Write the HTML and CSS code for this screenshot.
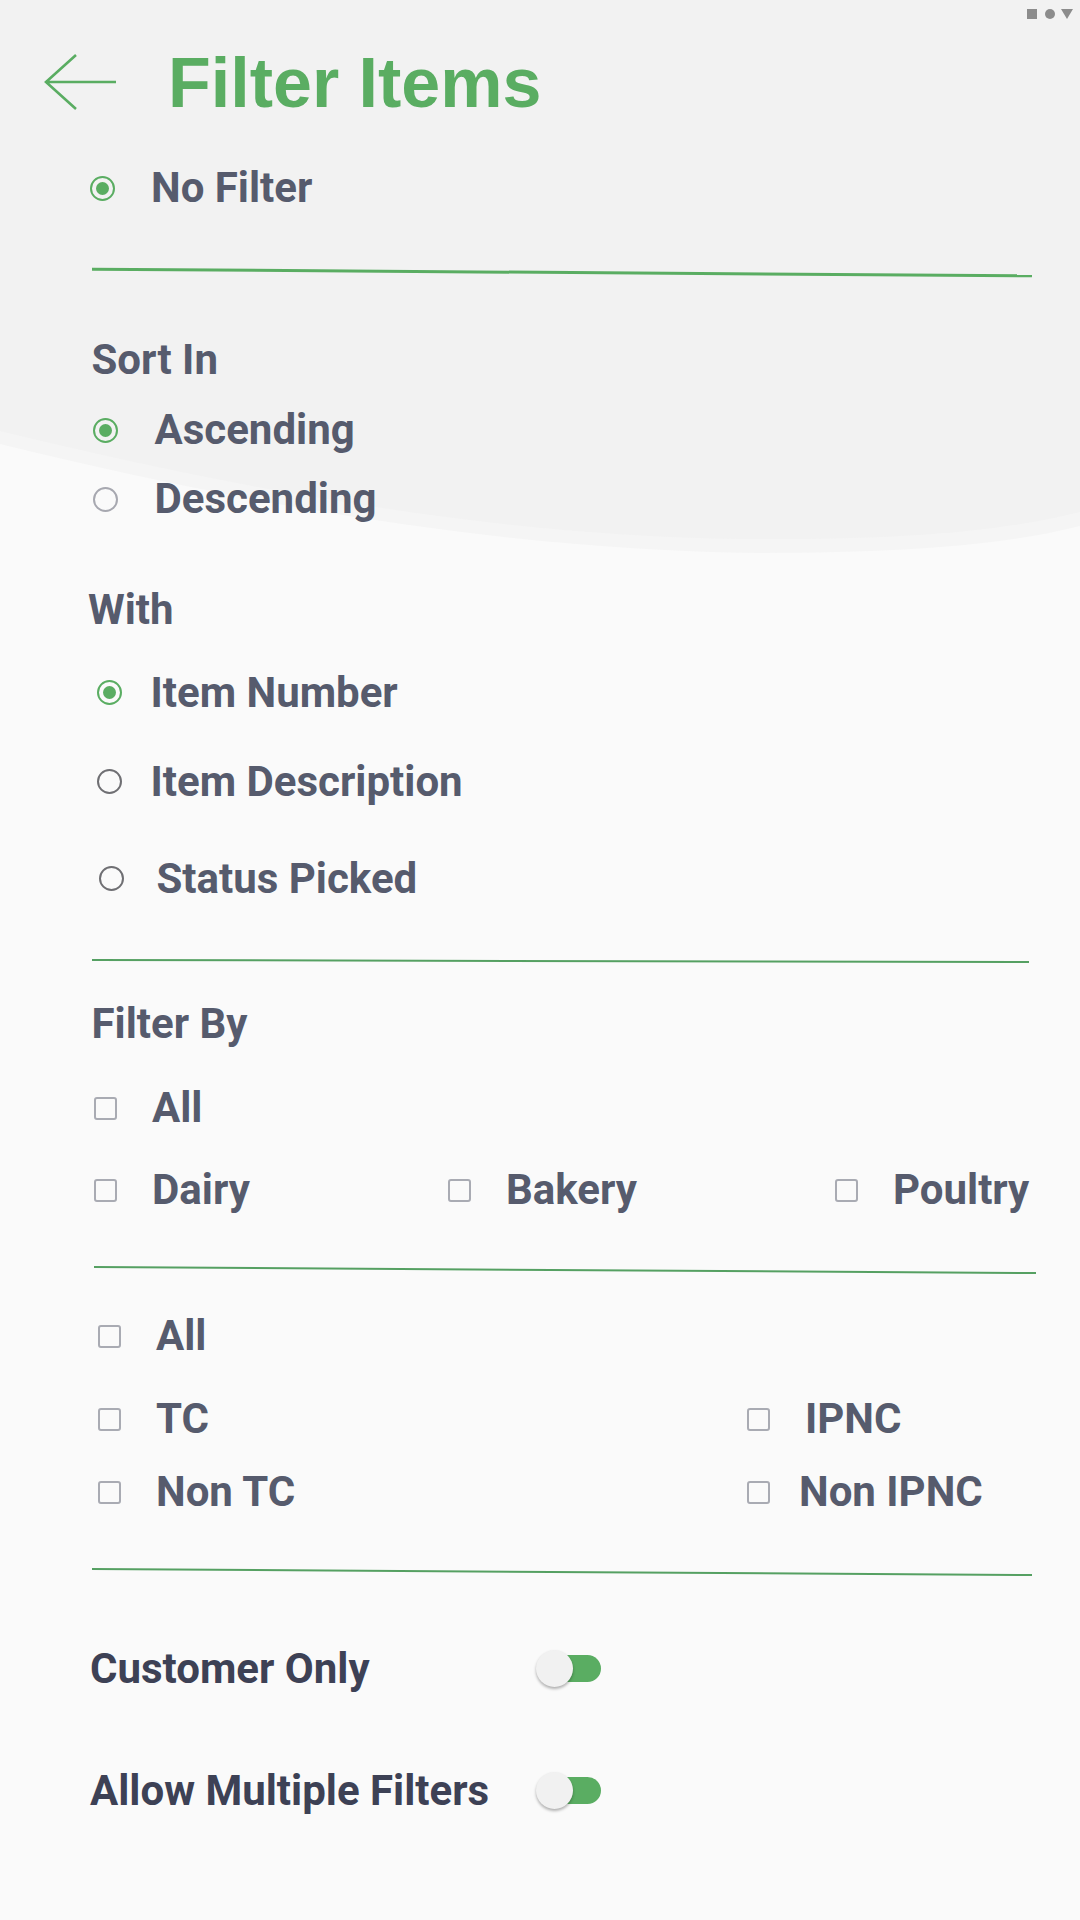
FILE: index.html
```html
<!DOCTYPE html>
<html lang="en">
<head>
<meta charset="utf-8">
<title>Filter Items</title>
<link rel="stylesheet" href="styles.css">
</head>
<body>
<div class="page">
  <svg class="bg" viewBox="0 0 1080 1920" width="1080" height="1920" aria-hidden="true">
    <path class="bg-band" d="M0 0 H1080 V526 C1000 546 900 553 760 553 C500 550 250 505 0 444 Z"/>
    <path class="bg-top" d="M0 0 H1080 V512 C1000 532 900 540 740 539 C500 536 250 492 0 431 Z"/>
  </svg>
  <div class="content">
    <div class="statusbar">
      <svg width="46" height="10" viewBox="0 0 46 10" aria-hidden="true">
        <rect x="0" y="0" width="10" height="10" fill="#8c8c8c"/>
        <circle cx="23" cy="5" r="5" fill="#8c8c8c"/>
        <polygon points="34,0 46,0 40,10" fill="#8c8c8c"/>
      </svg>
    </div>

    <header class="header">
      <svg class="back" width="74" height="58" viewBox="0 0 74 58" aria-hidden="true">
        <path d="M32 1 L2 28 L32 55 M2 28 H72"/>
      </svg>
      <h1 class="title">Filter Items</h1>
    </header>

    <div class="opt row-nofilter"><span class="radio on"></span><span>No Filter</span></div>

    <div class="rule rule-1"></div>

    <h2 class="heading head-sort">Sort In</h2>
    <div class="opt row-asc"><span class="radio on"></span><span>Ascending</span></div>
    <div class="opt row-desc"><span class="radio"></span><span>Descending</span></div>

    <h2 class="heading head-with">With</h2>
    <div class="opt row-num"><span class="radio on"></span><span>Item Number</span></div>
    <div class="opt row-descr"><span class="radio dark"></span><span>Item Description</span></div>
    <div class="opt row-status"><span class="radio dark"></span><span>Status Picked</span></div>

    <div class="rule rule-2"></div>

    <h2 class="heading head-filter">Filter By</h2>
    <div class="checks row-all1">
      <label class="ck"><span class="check"></span><span>All</span></label>
    </div>
    <div class="checks cat-grid">
      <label class="ck"><span class="check"></span><span>Dairy</span></label>
      <label class="ck"><span class="check"></span><span>Bakery</span></label>
      <label class="ck"><span class="check"></span><span>Poultry</span></label>
    </div>

    <div class="rule rule-3"></div>

    <div class="checks row-all2">
      <label class="ck"><span class="check"></span><span>All</span></label>
    </div>
    <div class="checks flag-grid row-tc">
      <label class="ck"><span class="check"></span><span>TC</span></label>
      <label class="ck"><span class="check"></span><span>IPNC</span></label>
    </div>
    <div class="checks flag-grid row-nontc">
      <label class="ck"><span class="check"></span><span>Non TC</span></label>
      <label class="ck ck-tight"><span class="check"></span><span>Non IPNC</span></label>
    </div>

    <div class="rule rule-4"></div>

    <div class="setting row-customer">
      <span>Customer Only</span>
      <span class="toggle"><span class="track"></span><span class="thumb"></span></span>
    </div>
    <div class="setting row-multi">
      <span>Allow Multiple Filters</span>
      <span class="toggle"><span class="track"></span><span class="thumb"></span></span>
    </div>
  </div>
</div>
</body>
</html>
```

FILE: styles.css
```css
* { box-sizing: border-box; }
html, body { margin: 0; padding: 0; }
body {
  background: #fafafa;
  font-family: Roboto, "Noto Sans", sans-serif;
  color: #565b6d;
}
.page {
  position: relative;
  width: 1080px;
  height: 1920px;
  overflow: hidden;
}
.bg { position: absolute; left: 0; top: 0; z-index: 0; }
.bg-top { fill: #f2f2f2; }
.bg-band { fill: #f5f5f5; }
.content { position: relative; z-index: 1; }

.statusbar {
  height: 28px;
  display: flex;
  justify-content: flex-end;
  padding: 9px 7px 0 0;
}
.statusbar svg { display: block; }

.header {
  height: 110px;
  display: flex;
  align-items: center;
  padding-left: 44px;
}
.back { display: block; flex: none; }
.back path { fill: none; stroke: #5aad62; stroke-width: 2.6; }
.title {
  margin: 0 0 0 50px;
  font-family: "Liberation Sans", Arial, sans-serif;
  font-weight: 700;
  font-size: 70px;
  line-height: 1;
  color: #5aad62;
}

/* option rows */
.opt {
  display: flex;
  align-items: center;
  height: 42px;
  font-size: 42px;
  line-height: 1;
  font-weight: 700;
}
.radio {
  position: relative;
  flex: none;
  width: 25px;
  height: 25px;
  border-radius: 50%;
  border: 2.5px solid #a7a8b0;
}
.radio.on { border-color: #5aad62; }
.radio.on::after {
  content: "";
  position: absolute;
  left: 50%;
  top: 50%;
  width: 13px;
  height: 13px;
  margin: -6.5px 0 0 -6.5px;
  border-radius: 50%;
  background: #5aad62;
}
.radio.dark { border-color: #6f6f73; border-width: 2.2px; }

.row-nofilter { margin-top: 29px; padding-left: 90px; gap: 36px; }
.row-asc { margin-top: 28.5px; padding-left: 93px; gap: 36.5px; }
.row-desc { margin-top: 27px; padding-left: 93px; gap: 36.5px; }
.row-num { margin-top: 41px; padding-left: 97px; gap: 28.5px; }
.row-descr { margin-top: 47px; padding-left: 96.5px; gap: 29px; }
.row-status { margin-top: 55px; padding-left: 98.5px; gap: 33px; }

/* section headings */
.heading {
  margin: 0;
  height: 42px;
  font-size: 42px;
  line-height: 1;
  font-weight: 700;
  padding-left: 91.5px;
}
.head-sort { margin-top: 65.5px; }
.head-with { margin-top: 68.5px; padding-left: 88px; }
.head-filter { margin-top: 41.7px; }

/* dividers */
.rule {
  height: 2px;
  background: #55a062;
  margin-left: 92px;
  width: 940px;
}
.rule-1 { margin-top: 61.5px; transform: rotate(0.4deg); background: #5aad62; height: 2.5px; }
.rule-2 { margin-top: 60px; width: 937px; transform: rotate(0.12deg); }
.rule-3 { margin-top: 58px; margin-left: 94px; width: 942px; transform: rotate(0.37deg); }
.rule-4 { margin-top: 58px; transform: rotate(0.37deg); }

/* checkboxes */
.checks {
  height: 42px;
  font-size: 42px;
  line-height: 1;
  font-weight: 700;
}
.ck {
  display: flex;
  align-items: center;
  height: 42px;
  gap: 35px;
}
.ck-tight { gap: 29px; }
.check {
  flex: none;
  width: 23px;
  height: 23px;
  border: 2.5px solid #a9abb3;
  border-radius: 3px;
}
.row-all1 { margin-top: 42.3px; padding-left: 94px; }
.cat-grid {
  margin-top: 40px;
  display: grid;
  grid-template-columns: 354px 387px auto;
  padding-left: 94px;
}
.row-all2 { margin-top: 44px; padding-left: 98px; }
.flag-grid {
  display: grid;
  grid-template-columns: 649px auto;
  padding-left: 98px;
}
.row-tc { margin-top: 41px; }
.row-nontc { margin-top: 31px; }

/* toggles */
.setting {
  display: grid;
  grid-template-columns: 446px auto;
  align-items: center;
  height: 42px;
  padding-left: 90px;
  font-size: 42px;
  line-height: 1;
  font-weight: 700;
  color: #3d4155;
}
.row-customer { margin-top: 75px; }
.row-multi { margin-top: 80px; }
.toggle {
  position: relative;
  display: block;
  width: 65px;
  height: 38px;
}
.track {
  position: absolute;
  left: 12px;
  top: 5px;
  width: 53px;
  height: 27px;
  border-radius: 13.5px;
  background: #5aad62;
}
.thumb {
  position: absolute;
  left: 0;
  top: 0;
  width: 37px;
  height: 37px;
  border-radius: 50%;
  background: #f1f1f1;
  box-shadow: 0 2px 3px rgba(0, 0, 0, 0.3);
}
```
